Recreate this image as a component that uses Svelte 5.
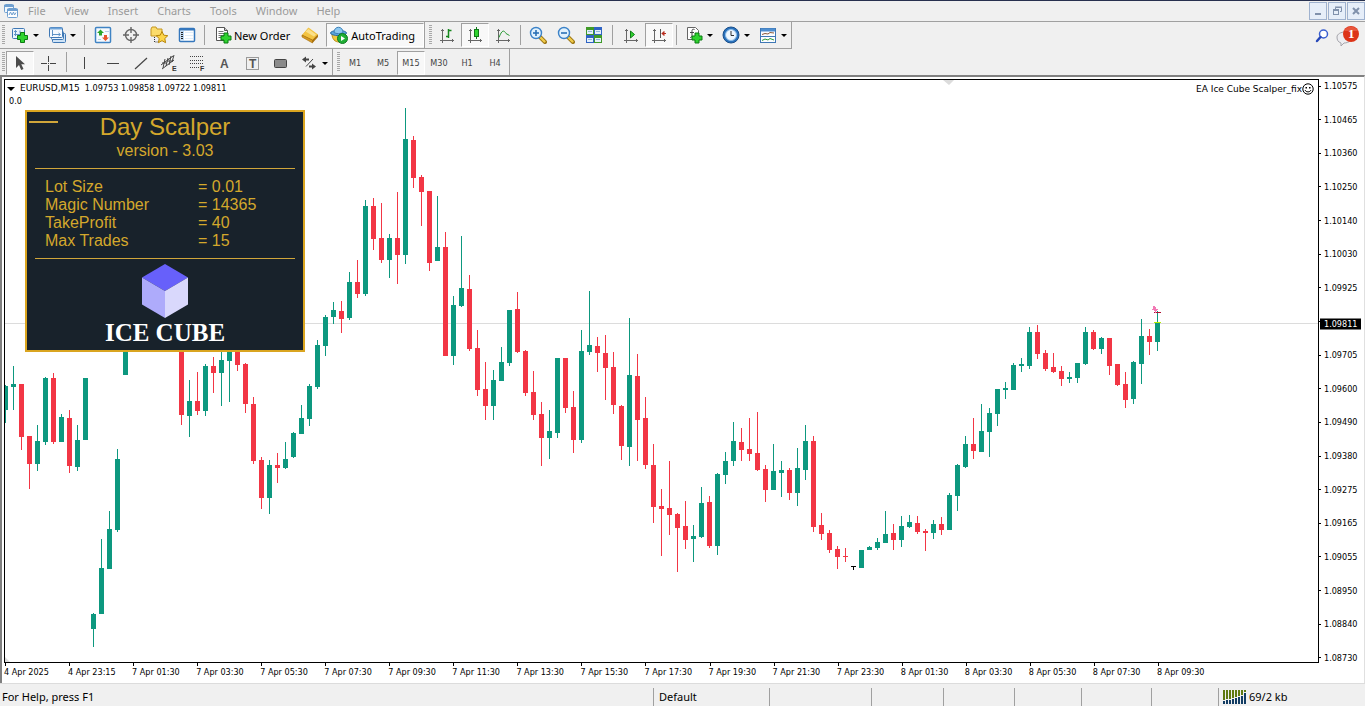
<script lang="ts">
  type Candle = [high: number, top: number, bottom: number, low: number, up: 0 | 1];

  const menus = ['File', 'View', 'Insert', 'Charts', 'Tools', 'Window', 'Help'];
  const periods = ['M1', 'M5', 'M15', 'M30', 'H1', 'H4'];
  let period = $state('M15');

  const settings = [
    ['Lot Size', '0.01'],
    ['Magic Number', '14365'],
    ['TakeProfit', '40'],
    ['Max Trades', '15'],
  ];

  // the 1.09815 label is left blank, the bid price sits on top of it
  const prices = [
    '1.10575', '1.10465', '1.10360', '1.10250', '1.10140', '1.10030', '1.09925', '', '1.09705',
    '1.09600', '1.09490', '1.09380', '1.09275', '1.09165', '1.09055', '1.08950', '1.08840', '1.08730',
  ];
  const times = [
    '4 Apr 2025', '4 Apr 23:15', '7 Apr 01:30', '7 Apr 03:30', '7 Apr 05:30', '7 Apr 07:30',
    '7 Apr 09:30', '7 Apr 11:30', '7 Apr 13:30', '7 Apr 15:30', '7 Apr 17:30', '7 Apr 19:30',
    '7 Apr 21:30', '7 Apr 23:30', '8 Apr 01:30', '8 Apr 03:30', '8 Apr 05:30', '8 Apr 07:30',
    '8 Apr 09:30',
  ];

  const bid = 1.09811;
  const bidOffset = ((1.10597 - bid) / (1.10597 - 1.08721)) * 100;

  const candles: Candle[] = [
    [385, 386, 410, 423, 1], [366, 384, 387, 410, 1], [384, 384, 437, 450, 0], [436, 436, 464, 489, 0],
    [425, 441, 464, 471, 1], [377, 378, 442, 445, 1], [373, 378, 442, 444, 0], [414, 417, 442, 442, 1],
    [410, 418, 466, 473, 0], [425, 440, 467, 471, 1], [378, 378, 440, 440, 1], [613, 614, 629, 647, 1],
    [539, 568, 614, 614, 1], [511, 529, 569, 569, 1], [449, 459, 530, 532, 1], [320, 330, 375, 375, 1],
    [300, 310, 330, 340, 1], [290, 300, 310, 330, 1], [280, 290, 300, 310, 1], [270, 280, 290, 300, 1],
    [270, 280, 310, 320, 0], [290, 300, 340, 345, 0], [310, 320, 415, 425, 0], [380, 401, 416, 437, 1],
    [372, 401, 411, 415, 0], [364, 366, 411, 416, 1], [357, 366, 373, 393, 0], [345, 360, 373, 406, 1],
    [335, 340, 361, 402, 1], [335, 340, 365, 371, 0], [363, 364, 404, 413, 0], [397, 404, 461, 464, 0],
    [457, 460, 498, 509, 0], [460, 465, 498, 514, 1], [453, 465, 468, 483, 0], [442, 459, 468, 469, 1],
    [432, 433, 457, 458, 1], [405, 418, 434, 434, 1], [384, 386, 419, 426, 1], [340, 345, 387, 389, 1],
    [315, 317, 346, 356, 1], [302, 310, 317, 324, 1], [301, 311, 319, 333, 0], [272, 282, 318, 320, 1],
    [260, 282, 294, 298, 0], [200, 206, 294, 296, 1], [198, 206, 239, 250, 0], [203, 238, 260, 263, 0],
    [234, 238, 260, 278, 1], [192, 238, 255, 284, 0], [108, 139, 255, 264, 1], [136, 140, 178, 188, 0],
    [175, 177, 192, 226, 0], [191, 191, 263, 271, 0], [196, 247, 261, 261, 1], [232, 247, 356, 356, 0],
    [296, 305, 356, 365, 1], [236, 288, 306, 307, 1], [275, 289, 349, 351, 0], [330, 348, 390, 396, 0],
    [362, 389, 406, 420, 0], [370, 380, 406, 420, 1], [347, 362, 381, 381, 1], [310, 310, 363, 366, 1],
    [292, 309, 352, 353, 0], [350, 351, 393, 396, 0], [371, 392, 415, 420, 0], [402, 414, 438, 466, 0],
    [410, 431, 438, 459, 1], [358, 358, 433, 438, 1], [358, 358, 408, 413, 0], [391, 407, 440, 453, 0],
    [330, 351, 440, 443, 1], [291, 345, 352, 355, 1], [337, 346, 353, 372, 0], [335, 353, 368, 400, 0],
    [352, 367, 405, 414, 0], [405, 406, 446, 460, 0], [318, 375, 447, 466, 1], [354, 376, 420, 461, 0],
    [397, 418, 465, 469, 0], [444, 465, 507, 523, 0], [489, 506, 509, 556, 0], [461, 508, 515, 535, 0],
    [513, 514, 528, 572, 0], [501, 526, 540, 549, 0], [525, 536, 539, 562, 1], [487, 503, 537, 538, 1],
    [496, 502, 546, 548, 0], [473, 474, 546, 555, 1], [452, 461, 475, 484, 1], [422, 441, 461, 466, 1],
    [428, 442, 450, 461, 0], [418, 449, 454, 461, 0], [412, 453, 470, 471, 0], [465, 469, 490, 502, 0],
    [444, 471, 490, 490, 1], [461, 470, 473, 497, 1], [468, 470, 493, 500, 0], [448, 468, 493, 506, 1],
    [425, 441, 470, 480, 1], [436, 441, 527, 532, 0], [513, 525, 534, 540, 0], [530, 533, 550, 553, 0],
    [546, 549, 557, 569, 0], [548, 556, 557, 562, 0], [566, 566, 567, 570, 1], [550, 550, 568, 568, 1],
    [546, 547, 550, 550, 1], [538, 542, 548, 550, 1], [511, 534, 543, 543, 1], [524, 533, 540, 550, 0],
    [516, 526, 540, 547, 1], [515, 522, 527, 528, 1], [516, 523, 532, 534, 0], [529, 531, 533, 551, 0],
    [520, 524, 533, 539, 1], [517, 524, 530, 535, 0], [493, 495, 530, 530, 1], [464, 465, 496, 511, 1],
    [436, 444, 467, 468, 1], [418, 444, 451, 459, 0], [404, 431, 452, 452, 1], [408, 413, 432, 457, 1],
    [389, 389, 414, 426, 1], [382, 388, 390, 399, 1], [363, 365, 390, 390, 1], [358, 364, 366, 372, 1],
    [327, 332, 366, 369, 1], [325, 332, 354, 359, 0], [350, 353, 369, 371, 0], [353, 367, 372, 373, 0],
    [366, 371, 379, 386, 0], [372, 377, 379, 383, 1], [363, 363, 378, 383, 1], [327, 332, 364, 365, 1],
    [330, 332, 349, 350, 0], [337, 338, 349, 354, 1], [338, 338, 366, 375, 0], [364, 364, 385, 386, 0],
    [372, 384, 400, 408, 0], [361, 362, 399, 404, 1], [319, 336, 364, 384, 1], [329, 336, 342, 355, 0],
    [311, 323, 342, 351, 1],
  ];

  function color(c: Candle) {
    if (c[2] - c[1] === 1 && c[4]) return '#000';
    return c[4] ? '#0d987f' : '#f23645';
  }
</script>

{#snippet plus(x: number, y: number)}
  <path
    d="M{x + 3} {y}h4v3h3v4h-3v3h-4v-3h-3v-4h3z"
    fill="#2fd32f"
    stroke="#0b7a12"
  />
{/snippet}

{#snippet axes()}
  <path d="M4.500 3v14M2 14.500h14M3 4.500h3M14.500 13v3" fill="none" stroke="#666" />
{/snippet}

{#snippet icon(name: string)}
  <svg class="icon" viewBox="0 0 18 18" width="18" height="18" aria-hidden="true">
    {#if name === 'chart-new'}
      <rect x="1.500" y="2.500" width="12" height="10" rx="1" fill="#e9f3fc" stroke="#3f78b5" />
      <path d="M4.500 4v6M3 5.500h3M3 8.500h7M9 4.500v3" stroke="#5f93c6" fill="none" />
      {@render plus(6.5, 6.5)}
    {:else if name === 'profiles'}
      <rect x="4.500" y="7.500" width="13" height="9" rx="1" fill="#cfe3f6" stroke="#3f78b5" />
      <rect x="3.500" y="5.500" width="12" height="8" rx="1" fill="#e9f3fc" stroke="#3f78b5" />
      <rect x="1.500" y="1.500" width="13" height="10" rx="1" fill="#f4f9fe" stroke="#3f78b5" />
      <path d="M2 2.500h12" stroke="#6ea3d8" stroke-width="2" />
      <path d="M4.500 4v6M4 8.500h8M10.500 7l2 1.500-2 1.500" stroke="#5f93c6" fill="none" />
    {:else if name === 'market'}
      <rect x="1.500" y="1.500" width="15" height="15" rx="1" fill="#f6fafe" stroke="#3f83c4" stroke-width="1.500" />
      <path d="M6.500 3.500l3.500 3.500h-2v2.500h-3V7h-2z" fill="#2aa52a" />
      <path d="M11.500 15l3.500-3.500h-2V9h-3v2.500h-2z" fill="#e8542a" />
      <path d="M4 13.500h3M11 5.500h4" stroke="#b9cfe4" />
    {:else if name === 'target'}
      <circle cx="9" cy="9" r="5.500" fill="none" stroke="#666" stroke-width="1.400" />
      <path d="M9 1v6M9 11v6M1 9h6M11 9h6" stroke="#666" stroke-width="1.400" />
    {:else if name === 'navigator'}
      <path d="M1 3l1-2h4l1 2h5v7H1z" fill="#fbdc6c" stroke="#c49620" />
      <path d="M4.500 11v5h4" fill="none" stroke="#333" stroke-dasharray="1 1" />
      <path d="M12 5.500l1.800 3.700 4 .5-3 2.800.8 4.200-3.600-2-3.600 2 .8-4.200-3-2.800 4-.5z" fill="#fdd54a" stroke="#b8860b" />
    {:else if name === 'terminal'}
      <rect x="1.500" y="2.500" width="15" height="13" rx="1" fill="#fff" stroke="#3577bd" stroke-width="1.500" />
      <path d="M2 3.500h14" stroke="#3577bd" stroke-width="2" />
      <path d="M3 5h3v10H3z" fill="#bcd8f2" />
      <path d="M3 6.500h2M3 8.500h2M3 10.500h2M3 12.500h2" stroke="#222" />
      <path d="M7 6.500h8M7 9.500h8M7 12.500h8" stroke="#e1eefa" />
    {:else if name === 'order'}
      <path d="M2.500 1.500h8l3 3v10h-11z" fill="#fff" stroke="#555" />
      <path d="M10.500 1.500v3h3" fill="#ccc" stroke="#555" />
      <path d="M4.500 5.500h5M4.500 7.500h7M4.500 9.500h6M4.500 11.500h4" stroke="#777" />
      {@render plus(7, 7)}
    {:else if name === 'gold'}
      <path d="M1 9.500l6-7 10 6.500-5.500 7.500z" fill="#b97a12" />
      <path d="M1 9l6.500-7.500 9.500 7-5.500 5.500z" fill="#f3c443" />
      <path d="M7.500 3l7.500 5.500-2 2-8.500-5z" fill="#fbe08a" />
      <path d="M1 9l10.500 5v3L1 11z" fill="#d69a20" stroke="#a16b0c" stroke-width=".6" />
      <path d="M11.500 14L17 8.500V11l-5.500 6z" fill="#a8700f" />
    {:else if name === 'auto'}
      <path d="M2 8c0 5 3 8 7 8s6-3 6-8z" fill="#f0c63e" stroke="#b98e17" />
      <ellipse cx="8.500" cy="7" rx="8" ry="2.600" fill="#5aa5dd" stroke="#2a6aa3" />
      <path d="M4 6.500c0-7 9-7 9 0-2 1.500-7 1.500-9 0z" fill="#8cc8f0" stroke="#3a7fb8" />
      <circle cx="12.500" cy="12.500" r="5" fill="#1fae35" stroke="#0c7a1f" />
      <path d="M11 10l4 2.500-4 2.500z" fill="#fff" />
    {:else if name === 'bars'}
      {@render axes()}
      <path d="M10.500 3v9M10.500 4.500h3M8 10.500h2.500" stroke="#14871c" fill="none" stroke-width="1.500" />
    {:else if name === 'candles'}
      {@render axes()}
      <path d="M10.500 1v12" stroke="#0f7a18" />
      <rect x="8.500" y="3.500" width="4" height="7" fill="#2fd32f" stroke="#0f7a18" />
    {:else if name === 'line'}
      {@render axes()}
      <path d="M5 11.500C8 3.500 10 4 12 7.500l3.500 2" stroke="#2a9a35" fill="none" />
    {:else if name === 'zoom-in' || name === 'zoom-out'}
      <path d="M11 11l5 5" stroke="#9a7413" stroke-width="4" stroke-linecap="round" />
      <path d="M11.500 11.500l4 4" stroke="#f0cb4a" stroke-width="2.400" stroke-linecap="round" />
      <circle cx="7" cy="7" r="5.500" fill="#e2f2fd" stroke="#3b82c8" stroke-width="1.400" />
      <path d="M4 7h6" stroke="#2a70b5" stroke-width="1.600" />
      {#if name === 'zoom-in'}<path d="M7 4v6" stroke="#2a70b5" stroke-width="1.600" />{/if}
    {:else if name === 'tile'}
      <rect x="1" y="1" width="8" height="8" fill="#3f9a28" /><rect x="9" y="1" width="8" height="8" fill="#2f63c4" />
      <rect x="1" y="9" width="8" height="8" fill="#2f63c4" /><rect x="9" y="9" width="8" height="8" fill="#3f9a28" />
      <path d="M2 4h6v4H2zM2 12h6v4H2zM10 4h6v4h-6zM10 12h6v4h-6z" fill="#e4f0fa" />
      <path d="M3 5.500h4M3 13.500h4M11 5.500h4M11 13.500h4" stroke="#8fb6dc" />
    {:else if name === 'scroll'}
      {@render axes()}
      <path d="M8.500 5l4 3.500-4 3.500z" fill="#2fd32f" stroke="#0f7a18" />
    {:else if name === 'shift'}
      {@render axes()}
      <path d="M10.500 3v9" stroke="#555" />
      <path d="M16 7.500h-4M14 5.500l-2 2 2 2z" stroke="#b82c1e" fill="#b82c1e" />
    {:else if name === 'indicators'}
      <path d="M2.500 1.500h8l3 3v9h-11z" fill="#fff" stroke="#666" />
      <path d="M9.500 3.500c-3-1-2.500 1-2.500 4.500s-.5 3.500-2 3.500M5 6.500h4" fill="none" stroke="#444" />
      {@render plus(7, 7)}
    {:else if name === 'clock'}
      <circle cx="9" cy="9" r="8" fill="#2a72bd" stroke="#1a4f8a" />
      <circle cx="9" cy="9" r="5.500" fill="#eef7fe" stroke="#8dbde8" />
      <path d="M9 5v4.500h3" fill="none" stroke="#333" />
    {:else if name === 'template'}
      <rect x="1.500" y="2.500" width="15" height="14" fill="#fbfdff" stroke="#3f78b5" />
      <path d="M2 4h14" stroke="#4f8fd0" stroke-width="3" />
      <path d="M2 10.500h14" stroke="#3f78b5" />
      <path d="M3 8.500l3-1 3 .5 2-1.500 4 .5" fill="none" stroke="#8a5a3a" />
      <path d="M3 14.500l3-1.500 3 1 2-1.500 4 1.500" fill="none" stroke="#2a9a35" />
    {:else if name === 'cursor'}
      <path d="M5 2v12l3-3 2.200 5 2.300-1-2.200-4.800H14z" fill="#4c4c4c" />
    {:else if name === 'cross'}
      <path d="M9.500 2v6M9.500 11v6M2 9.500h6M11 9.500h6M9 9.500h1" stroke="#444" />
    {:else if name === 'vline'}
      <path d="M8.500 3v12" stroke="#444" />
    {:else if name === 'hline'}
      <path d="M3 9.500h12" stroke="#444" />
    {:else if name === 'trend'}
      <path d="M3 15L15 4" stroke="#444" stroke-width="1.200" />
    {:else if name === 'channel'}
      <path d="M1 11L13 2M2 15L14 6M5 5l-2 9M8 4l-2 8M11 2L9 11M14 1l-2 7M2 9h5M7 7h6" stroke="#444" fill="none" />
      <text x="12" y="17" class="mark">E</text>
    {:else if name === 'fibo'}
      <path d="M2 2.500h14M2 6.500h14M2 9.500h14M2 13.500h9" stroke="#444" stroke-dasharray="1 1" />
      <text x="12" y="17" class="mark">F</text>
    {:else if name === 'text'}
      <text x="4" y="14" class="letter">A</text>
    {:else if name === 'label'}
      <rect x="2.500" y="3.500" width="12" height="12" fill="none" stroke="#444" stroke-dasharray="1 1" />
      <text x="5" y="14" class="letter">T</text>
    {:else if name === 'rect'}
      <rect x="2.500" y="5.500" width="12" height="8" rx="1" fill="#8b8b8b" stroke="#444" />
    {:else if name === 'arrows'}
      <path d="M2 5.500l4-3v2h3v2H6v2z" fill="#444" />
      <path d="M6 12.500L13 5" stroke="#444" />
      <path d="M16 12.500l-4 3v-2H9v-2h3v-2z" fill="#444" />
    {/if}
  </svg>
{/snippet}

{#snippet tool(name: string, label: string, pressed = false)}
  <button class="tool" class:pressed aria-label={label}>{@render icon(name)}</button>
{/snippet}

{#snippet dropdown(name: string, label: string)}
  <button class="tool tool--drop" aria-label={label}>
    {@render icon(name)}<span class="caret"></span>
  </button>
{/snippet}

<div class="app">
  <header class="menubar">
    <svg class="logo" viewBox="0 0 16 16" width="16" height="16" aria-hidden="true">
      <rect x="1.500" y="1.500" width="9" height="8" rx="1" fill="#f2f8fd" stroke="#6f9fd0" />
      <path d="M1 3h10" stroke="#6f9fd0" stroke-width="2" />
      <rect x="4.500" y="5.500" width="10" height="9" rx="1" fill="#fff" stroke="#6f9fd0" />
      <path d="M4 7h11" stroke="#6f9fd0" stroke-width="2" />
      <path d="M6 12l1.500-3 1.500 3 1.500-3 1 3 1.500-2.500" fill="none" stroke="#6f9fd0" />
    </svg>
    <nav class="menus">
      {#each menus as item}
        <button class="menu">{item}</button>
      {/each}
    </nav>
    <div class="window-buttons">
      <button aria-label="Minimize">
        <svg viewBox="0 0 16 16" width="16" height="16"><path d="M5 11h6" stroke="#8091ac" stroke-width="2" /></svg>
      </button>
      <button aria-label="Restore">
        <svg viewBox="0 0 16 16" width="16" height="16">
          <path d="M6.500 6V4.500h6v4H11M6 4h7" fill="none" stroke="#8091ac" />
          <rect x="4.500" y="7.500" width="5" height="4" fill="none" stroke="#8091ac" />
          <path d="M4 7h6" stroke="#8091ac" stroke-width="2" />
        </svg>
      </button>
      <button aria-label="Close">
        <svg viewBox="0 0 16 16" width="16" height="16"><path d="M5 5l6 6M11 5l-6 6" stroke="#8091ac" stroke-width="2" /></svg>
      </button>
    </div>
  </header>

  <div class="toolbar toolbar--main">
    <div class="group">
      <i class="grip"></i>
      {@render dropdown('chart-new', 'New chart')}
      {@render dropdown('profiles', 'Profiles')}
      <i class="sep sep--wide"></i>
      {@render tool('market', 'Market Watch')}
      {@render tool('target', 'Data Window')}
      {@render tool('navigator', 'Navigator')}
      {@render tool('terminal', 'Terminal')}
      <i class="sep"></i>
      <button class="tool tool--text">{@render icon('order')}New Order</button>
      {@render tool('gold', 'MetaEditor')}
      <button class="tool tool--text tool--auto pressed">{@render icon('auto')}AutoTrading</button>
    </div>
    <div class="group">
      <i class="grip"></i>
      {@render tool('bars', 'Bar Chart')}
      {@render tool('candles', 'Candlesticks', true)}
      {@render tool('line', 'Line Chart')}
      <i class="sep"></i>
      {@render tool('zoom-in', 'Zoom In')}
      {@render tool('zoom-out', 'Zoom Out')}
      {@render tool('tile', 'Tile Windows')}
      <i class="sep sep--wide"></i>
      {@render tool('scroll', 'Auto Scroll')}
      {@render tool('shift', 'Chart Shift', true)}
      <i class="sep"></i>
      {@render dropdown('indicators', 'Indicators')}
      {@render dropdown('clock', 'Periods')}
      {@render dropdown('template', 'Templates')}
    </div>
    <div class="corner">
      <button class="corner__button" aria-label="Search">
        <svg viewBox="0 0 16 16" width="16" height="16">
          <circle cx="9.500" cy="6" r="4" fill="#fff" stroke="#3a5fd0" stroke-width="1.500" />
          <path d="M6.500 9L3 13" stroke="#2546b8" stroke-width="2.400" stroke-linecap="round" />
        </svg>
      </button>
      <button class="corner__button" aria-label="Messages">
        <svg viewBox="0 0 26 22" width="26" height="22">
          <path d="M3 12c0-3 4-5 8-5s7 2 7 5-3 6-8 6l-3 3v-3c-3-1-4-3-4-6z" fill="#ededf0" stroke="#a5a5ab" />
          <circle cx="17" cy="9" r="8" fill="#dd3418" />
          <path d="M10 6a8 8 0 0 1 14 0z" fill="#e8563c" />
        </svg>
        <span class="count">1</span>
      </button>
    </div>
  </div>

  <div class="toolbar toolbar--line">
    <div class="group">
      <i class="grip"></i>
      {@render tool('cursor', 'Cursor', true)}
      {@render tool('cross', 'Crosshair')}
      <i class="sep sep--wide"></i>
      {@render tool('vline', 'Vertical Line')}
      {@render tool('hline', 'Horizontal Line')}
      {@render tool('trend', 'Trendline')}
      {@render tool('channel', 'Equidistant Channel')}
      {@render tool('fibo', 'Fibonacci Retracement')}
      {@render tool('text', 'Text')}
      {@render tool('label', 'Text Label')}
      {@render tool('rect', 'Rectangle')}
      {@render dropdown('arrows', 'Arrows')}
    </div>
    <div class="group">
      <i class="grip"></i>
      {#each periods as p}
        <button class="tool period" class:pressed={p === period} onclick={() => (period = p)}>{p}</button>
      {/each}
    </div>
  </div>

  <main class="chart">
    <div class="plot">
      <svg class="candles" viewBox="5 80 1313 582" preserveAspectRatio="none">
        <path d="M5 323h1313v1H5z" fill="#dcdcdc" />
        <path d="M943 80h11l-5 5zM5 657l5 5H5z" fill="#dcdcdc" />
        {#each candles as c, i}
          <g fill={color(c)}>
            <rect x={5 + i * 8} y={c[0]} width="1" height={c[3] - c[0]} />
            <rect x={3 + i * 8} y={c[1]} width="5" height={c[2] - c[1]} />
          </g>
        {/each}
        <path d="M1154 312h7v1h-7z" fill="#b01030" />
        <path d="M1154 322h7v1h-7z" fill="#b6f000" />
        <path d="M1153 306h2v1h1v2h2v1h-1v1h-1v2h-1v-2h-1v-1h-2v-1h1z" fill="#f279b4" />
      </svg>

      <div class="quote">
        <p class="quote__line">
          <i class="caret caret--wide"></i>
          <span class="wide">EURUSD,M15</span>
          <span>1.09753 1.09858 1.09722 1.09811</span>
        </p>
        <p>0.0</p>
      </div>
      <div class="expert wide">
        EA Ice Cube Scalper_fix
        <svg viewBox="0 0 12 12" width="12" height="12" aria-hidden="true">
          <circle cx="6" cy="6" r="5.200" fill="#fff" stroke="#000" />
          <path d="M3.500 4h1.500v1.500H3.500zM7 4h1.500v1.500H7z" />
          <path d="M3 7c1 2.500 5 2.500 6 0" fill="none" stroke="#000" />
        </svg>
      </div>

      <section class="panel">
        <i class="panel__dash"></i>
        <h1>Day Scalper</h1>
        <p class="panel__version">version - 3.03</p>
        <dl>
          {#each settings as [name, value]}
            <dt>{name}</dt>
            <dd>= {value}</dd>
          {/each}
        </dl>
        <svg class="cube" viewBox="0 0 46 54" width="46" height="54" aria-hidden="true">
          <path d="M23 0l23 13.500L23 27 0 13.500z" fill="#6760fa" />
          <path d="M0 13.500L23 27v27L0 40.500z" fill="#aeabfb" />
          <path d="M46 13.500L23 27v27l23-13.500z" fill="#d9d8fc" />
        </svg>
        <p class="panel__brand">ICE CUBE</p>
      </section>
    </div>

    <div class="prices">
      {#each prices as price}
        <span>{price}</span>
      {/each}
      <strong class="bid" style="top: {bidOffset}%">{bid}</strong>
    </div>

    <div class="times">
      {#each times as time}
        <span>{time}</span>
      {/each}
    </div>
  </main>

  <footer class="status">
    <span>For Help, press F1</span>
    <span>Default</span>
    <span></span><span></span><span></span><span></span><span></span><span></span>
    <span class="traffic">
      <svg viewBox="0 0 24 14" width="24" height="14" shape-rendering="crispEdges" aria-hidden="true">
        {#each [10, 9, 9, 8, 7, 6, 5, 2] as h, i}
          <rect x={i * 3} y="0" width="2" height={h} fill="#5f7a10" />
          <rect x={i * 3} y={h + 1} width="2" height={13 - h} fill="#123c63" />
        {/each}
      </svg>
      69/2 kb
    </span>
  </footer>
</div>

<style>
  :global(body) {
    margin: 0;
    background: #f0f0f0;
  }

  .app {
    display: flex;
    flex-direction: column;
    min-height: 100vh;
    font-family: 'Noto Sans', 'Open Sans', sans-serif;
    font-size: 11px;
    color: #000;
    background: #f0f0f0;
  }

  p,
  h1,
  dl,
  dd {
    margin: 0;
  }

  button {
    padding: 0;
    border: 1px solid transparent;
    background: none;
    color: inherit;
    font: inherit;
    box-sizing: border-box;
  }

  .menubar {
    display: flex;
    align-items: center;
    height: 22px;
    box-sizing: border-box;
    border-top: 1px solid #27304f;
    border-bottom: 1px solid #a0a0a0;
  }

  .logo {
    margin-left: 3px;
  }

  .menus {
    display: flex;
    flex: 1;
    gap: 1px;
  }

  .menu {
    padding: 0 8px;
    line-height: 16px;
    color: #9b9b9b;
  }

  .window-buttons {
    display: flex;
    gap: 1px;
  }

  .window-buttons button {
    width: 18px;
    height: 18px;
    border-color: #9fb2cf;
    background: #e6eef9;
  }

  .window-buttons svg {
    display: block;
  }

  .toolbar {
    display: flex;
    height: 26px;
  }

  .toolbar--main {
    height: 27px;
  }

  .toolbar--line .tool {
    margin-top: 2px;
  }

  .group {
    display: flex;
    align-items: center;
    box-sizing: border-box;
  }

  .toolbar--main .group {
    border-bottom: 1px solid #a0a0a0;
  }

  .group + .group {
    padding-left: 2px;
    border-left: 1px solid #a0a0a0;
    border-right: 1px solid #a0a0a0;
  }

  .grip {
    width: 3px;
    height: 20px;
    margin: 0 1px 0 2px;
    background: repeating-linear-gradient(#a8a8a8 0 1px, #f0f0f0 1px 2px);
  }

  .sep {
    width: 1px;
    height: 20px;
    margin: 0 3px;
    background: #a0a0a0;
  }

  .sep--wide {
    margin: 0 4px;
  }

  .tool {
    display: flex;
    align-items: center;
    justify-content: center;
    width: 28px;
    height: 24px;
  }

  .tool--drop {
    justify-content: flex-start;
    gap: 4px;
    width: 37px;
    padding-left: 4px;
  }

  .tool--text {
    justify-content: flex-start;
    gap: 2px;
    width: auto;
    padding: 0 5px;
  }

  .tool--auto {
    margin-left: 2px;
    padding: 0 8px 0 3px;
    gap: 3px;
  }

  .pressed {
    border-color: #a0a0a0 #fff #fff #a0a0a0;
    background: #f8f8f8;
  }

  .icon {
    flex: none;
  }

  .letter {
    font: bold 12px 'Liberation Sans', sans-serif;
    fill: #555;
  }

  .mark {
    font: bold 7px 'Liberation Sans', sans-serif;
    fill: #333;
  }

  .caret {
    width: 0;
    border: 3px solid transparent;
    border-top-color: #000;
    border-bottom: 0;
  }

  .caret--wide {
    border-width: 4px 4px 0;
  }

  .period {
    font-family: 'DejaVu Sans Condensed', 'DejaVu Sans', sans-serif;
    font-size: 9px;
    color: #444;
  }

  .corner {
    display: flex;
    align-items: center;
    gap: 4px;
    margin-left: auto;
    padding-right: 5px;
  }

  .corner__button {
    position: relative;
    border: 0;
  }

  .corner__button svg {
    display: block;
  }

  .count {
    position: absolute;
    top: 1px;
    left: 14px;
    font: bold 13px/15px 'Liberation Serif', serif;
    color: #fff;
  }

  .chart {
    display: grid;
    flex: 1;
    grid-template: minmax(400px, 1fr) 20px / 1fr 45px;
    padding: 2px 0 0 2px;
    border: solid #808080;
    border-width: 2px 0 0 2px;
    border-right: 1px solid #e0e0e0;
    background: #fff;
    font-family: 'DejaVu Sans Condensed', 'DejaVu Sans', sans-serif;
    font-size: 9px;
    line-height: 10px;
  }

  .wide {
    font-family: 'DejaVu Sans', sans-serif;
  }

  .plot {
    position: relative;
    border: 1px solid #000;
  }

  .candles {
    position: absolute;
    width: 100%;
    height: 100%;
  }

  .quote {
    position: absolute;
    top: 2px;
    left: 4px;
    line-height: 13px;
  }

  .quote__line {
    display: flex;
    align-items: center;
    gap: 5px;
    margin-left: -2px;
  }

  .expert {
    position: absolute;
    top: 3px;
    right: 4px;
    display: flex;
    align-items: center;
    line-height: 12px;
  }

  .panel {
    position: absolute;
    top: 30px;
    left: 20px;
    width: 280px;
    height: 242px;
    padding: 1px 8px 2px;
    box-sizing: border-box;
    border: 2px solid #daa520;
    background: #18222b;
    color: #d4a82c;
    font-family: 'Liberation Sans', Arial, sans-serif;
    font-size: 16px;
    line-height: 18px;
    text-align: center;
  }

  .panel__dash {
    position: absolute;
    top: 9px;
    left: 2px;
    width: 29px;
    height: 2px;
    background: #d0a63a;
  }

  .panel h1 {
    font-size: 24px;
    font-weight: 400;
    line-height: 28px;
  }

  .panel__version {
    line-height: 20px;
  }

  .panel dl {
    display: grid;
    grid-template-columns: 153px 1fr;
    margin: 7px 0 5px;
    padding: 9px 10px 8px;
    border: solid #d0a63a;
    border-width: 1px 0;
    text-align: left;
  }

  .cube {
    display: block;
    margin: 0 auto;
  }

  .panel__brand {
    color: #fff;
    font: bold 25px/30px 'Liberation Serif', serif;
  }

  .prices {
    position: relative;
    display: flex;
    flex-direction: column;
    justify-content: space-between;
    padding-top: 2px;
  }

  .prices span {
    display: flex;
    align-items: center;
    gap: 3px;
    height: 10px;
  }

  .prices span::before {
    content: '';
    width: 2px;
    height: 1px;
    background: #000;
  }

  .bid {
    position: absolute;
    left: 1px;
    padding: 0 4px;
    background: #000;
    color: #fff;
    font-weight: 400;
    line-height: 11px;
    transform: translateY(-50%);
  }

  .times {
    display: grid;
    grid-template-columns: repeat(19, 64fr) 98fr;
  }

  .times span {
    position: relative;
    padding-top: 4px;
    white-space: nowrap;
  }

  .times span::before {
    content: '';
    position: absolute;
    top: 0;
    left: 1px;
    width: 1px;
    height: 3px;
    background: #000;
  }

  .status {
    display: grid;
    grid-template-columns: 651fr 116fr 102fr 72fr 71fr 67fr 70fr 67fr 147fr;
    height: 23px;
    box-sizing: border-box;
    padding: 4px 0 0 2px;
    border-top: 1px solid #dcdcdc;
    line-height: 18px;
  }

  .status span + span {
    padding-left: 5px;
    border-left: 1px solid #a0a0a0;
  }

  .status .traffic {
    display: flex;
    align-items: center;
    gap: 2px;
    padding-left: 4px;
  }
</style>
